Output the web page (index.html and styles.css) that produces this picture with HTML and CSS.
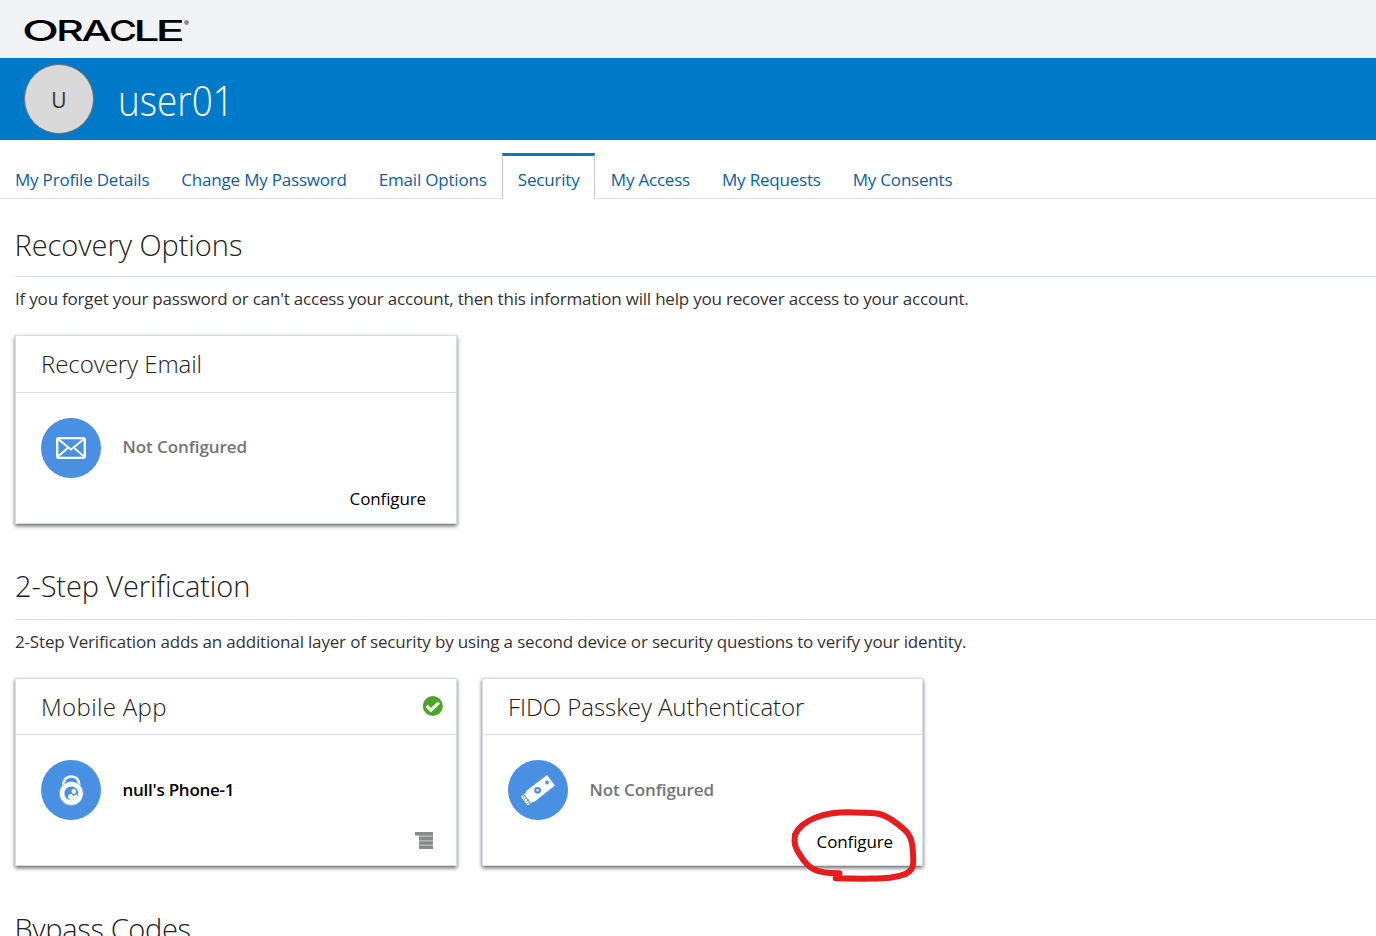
FILE: index.html
```html
<!DOCTYPE html>
<html lang="en">
<head>
<meta charset="utf-8">
<title>My Profile - Security</title>
<link rel="stylesheet" href="styles.css">
</head>
<body>
<header class="topbar">
  <svg class="logo" width="180" height="50" viewBox="-4 -10 180 50" role="img" aria-label="Oracle">
    <g class="logo-letters">
      <text x="-2" y="27" textLength="37" lengthAdjust="spacingAndGlyphs">O</text>
      <text x="32" y="27" textLength="28" lengthAdjust="spacingAndGlyphs">R</text>
      <text x="57.500" y="27" textLength="30" lengthAdjust="spacingAndGlyphs">A</text>
      <text x="85" y="27" textLength="28" lengthAdjust="spacingAndGlyphs">C</text>
      <text x="109.500" y="27" textLength="26" lengthAdjust="spacingAndGlyphs">L</text>
      <text x="131.500" y="27" textLength="29.500" lengthAdjust="spacingAndGlyphs">E</text>
    </g>
    <circle cx="162.500" cy="8.500" r="2.400" fill="#8b8c8d"/>
  </svg>
</header>
<div class="banner">
  <div class="avatar">U</div>
  <h1 class="username">user01</h1>
</div>
<nav class="tabs">
  <a class="tab">My Profile Details</a>
  <a class="tab">Change My Password</a>
  <a class="tab">Email Options</a>
  <a class="tab active">Security</a>
  <a class="tab">My Access</a>
  <a class="tab">My Requests</a>
  <a class="tab">My Consents</a>
</nav>
<main class="content">
  <section class="section recovery">
    <h2 class="heading">Recovery Options</h2>
    <p class="intro">If you forget your password or can't access your account, then this information will help you recover access to your account.</p>
    <div class="cards">
      <article class="card">
        <div class="card-head"><h3>Recovery Email</h3></div>
        <div class="card-body">
          <span class="badge">
            <svg width="60" height="60" viewBox="0 0 60 60" fill="none" stroke="#fff">
              <rect x="16.200" y="20.200" width="27.600" height="19.600" rx="1.500" stroke-width="2.300"/>
              <path d="M17 21l13 10.500L43 21M17 38.500l9.500-8.300M43 38.500l-9.500-8.300" stroke-width="2"/>
            </svg>
          </span>
          <span class="status muted">Not Configured</span>
        </div>
        <div class="card-foot"><a class="action">Configure</a></div>
      </article>
    </div>
  </section>
  <section class="section twostep">
    <h2 class="heading">2-Step Verification</h2>
    <p class="intro">2-Step Verification adds an additional layer of security by using a second device or security questions to verify your identity.</p>
    <div class="cards">
      <article class="card">
        <div class="card-head">
          <h3 class="wide">Mobile App</h3>
          <svg class="check" width="21" height="20" viewBox="0 0 21 20">
            <circle cx="10.800" cy="10" r="10" fill="#4ba524"/>
            <path d="M4.700 9.800l4.300 4.400L16.800 6.700" fill="none" stroke="#fff" stroke-width="3.200"/>
          </svg>
        </div>
        <div class="card-body">
          <span class="badge">
            <svg width="60" height="60" viewBox="0 0 60 60">
              <path d="M22.300 26c0-6 2.500-9.500 8-9.500s8 3.500 8 9.500" fill="none" stroke="#fff" stroke-width="2.600"/>
              <circle cx="30.300" cy="33.400" r="12" fill="#fff" stroke="#4990e2" stroke-width=".6"/>
              <circle cx="30.300" cy="33.400" r="6.900" fill="#4990e2"/>
              <circle cx="32.800" cy="31.400" r="2.300" fill="#fff"/>
              <path d="M27.300 35.200q1.500-1.800 3.600-1l1.500 2.200 1.800-2 2.300.3q-1 4.300-4.200 5h-3.500q-2-1-1.500-4.500z" fill="#fff"/>
            </svg>
          </span>
          <span class="status">null's Phone-1</span>
        </div>
        <div class="card-foot">
          <svg class="menu" width="18" height="17" viewBox="0 0 18 17">
            <path d="M4 3h14v14H4z" fill="#b4b6b7"/>
            <path d="M0 0h18v3.500H0zM4 5h14v3H4zM4 9.500h14v3H4zM4 14h14v3H4z" fill="#87898b"/>
          </svg>
        </div>
      </article>
      <article class="card fido">
        <div class="card-head"><h3>FIDO Passkey Authenticator</h3></div>
        <div class="card-body">
          <span class="badge">
            <svg width="60" height="60" viewBox="0 0 60 60">
              <path d="M39 15l8 10.500-20.300 16.100-2.300.3-4.700 3.600L13 36.800l4.700-3.700.8-2.300z" fill="#fff"/>
              <circle cx="29.600" cy="30.300" r="2.300" fill="#fff" stroke="#4990e2" stroke-width="2.200"/>
              <circle cx="39" cy="22.500" r="1.900" fill="#4990e2"/>
              <path d="M16.200 35.200l6 7.700M14.600 37.600l3-2.100M16.200 39.700l3-2.100M17.800 41.800l3-2.100M19.400 43.700l2.600-1.800" fill="none" stroke="#4990e2"/>
            </svg>
          </span>
          <span class="status muted">Not Configured</span>
        </div>
        <div class="card-foot"><a class="action">Configure</a></div>
        <svg class="marker" width="126" height="73" viewBox="963 417 378 219">
          <path d="M1108 610C1040 611 1015 597 990 555C975 532 971 520 975 494C998 446 1065 427 1136 427C1235 429 1233 429 1266 450C1311 481 1326 496 1328 538C1332 585 1332 598 1308 611C1268 627 1240 625 1182 626L1097 625"/>
        </svg>
      </article>
    </div>
  </section>
  <section class="section bypass">
    <h2 class="heading">Bypass Codes</h2>
  </section>
</main>
</body>
</html>
```

FILE: styles.css
```css
* { box-sizing: border-box; }
html { overflow: hidden; }
body {
  margin: 0;
  height: 936px;
  overflow: hidden;
  background: #fff;
  color: #333;
  font: 17px/24px "Open Sans", "Noto Sans", sans-serif;
}
h1, h2, h3, p { margin: 0; font-weight: 300; }

.topbar {
  height: 58px;
  padding: 4px 0 0 20px;
  background: #f2f3f5;
}
.logo { display: block; }
.logo-letters {
  font-family: Inter, sans-serif;
  font-size: 29px;
  font-weight: 500;
  fill: #000;
}

.banner {
  display: flex;
  align-items: flex-start;
  height: 82px;
  padding: 6px 24px 0;
  background: #007ac8;
}
.avatar {
  width: 70px;
  height: 70px;
  border: 1px solid #777;
  border-radius: 50%;
  background: #d9d9d9;
  color: #333;
  font-size: 21px;
  line-height: 70px;
  text-align: center;
}
.username {
  margin: 8px 0 0 24px;
  color: #fff;
  font-size: 42px;
  line-height: 56px;
  transform: scaleX(0.88);
  transform-origin: left;
}

.tabs {
  display: flex;
  height: 59px;
  padding-top: 13px;
  border-bottom: 1px solid #dfe1e3;
}
.tab {
  height: 46px;
  padding: 15px 16px 0;
  color: #0b5ea8;
  letter-spacing: -0.2px;
  white-space: nowrap;
}
.tab:first-child { padding-left: 15px; }
.tab:nth-child(3) { width: 139px; }
.tab.active {
  width: 93px;
  padding: 12px 15px 0;
  border: solid #c6c8ca;
  border-width: 3px 1px 0;
  border-top-color: #007ac8;
  background: #fff;
}

.content { padding: 26px 0 0 15px; }
.heading {
  height: 52px;
  border-bottom: 1px solid #d6dfe6;
  font-size: 29px;
  line-height: 40px;
  text-indent: -0.5px;
  letter-spacing: -0.05px;
  color: #222;
}
.twostep { padding-top: 42px; }
.twostep .heading { height: 54px; text-indent: 0; letter-spacing: -0.12px; }
.bypass { padding-top: 42px; }
.bypass .heading { letter-spacing: -0.35px; }
.intro {
  padding-top: 10px;
  margin-bottom: -1px;
  font-weight: 400;
  letter-spacing: -0.2px;
  white-space: nowrap;
}
.twostep .intro { letter-spacing: -0.17px; }

.cards { display: flex; gap: 24px; padding-top: 25px; }
.card {
  position: relative;
  display: flex;
  flex-direction: column;
  width: 442px;
  height: 189px;
  border: 1px solid #d6dfe6;
  background: #fff;
  box-shadow: 0 2px 4px rgba(0, 0, 0, 0.6);
}
.twostep .card { height: 188px; margin-bottom: 1px; }
.twostep .fido { width: 441px; margin-left: 1px; }
.card-head {
  display: flex;
  justify-content: space-between;
  height: 57px;
  padding: 8px 13px 0 25px;
  border-bottom: 1px solid #d6dfe6;
}
.twostep .card-head { height: 56px; }
.card-head h3 { font-size: 24px; line-height: 40px; letter-spacing: -0.06px; color: #222; }
.card-head .wide { letter-spacing: 0.35px; }
.check { margin-top: 9px; }
.card-body {
  display: flex;
  align-items: center;
  gap: 21px;
  padding: 25px 25px 0;
}
.badge {
  width: 60px;
  height: 60px;
  border-radius: 50%;
  background: #4990e2;
}
.badge svg { display: block; }
.status {
  padding: 0 0 2px 0.5px;
  color: #000;
  font-weight: 600;
  letter-spacing: -0.25px;
}
.twostep .status { padding-bottom: 0; }
.status.muted { color: #757575; letter-spacing: -0.08px; }
.card-foot {
  display: flex;
  justify-content: flex-end;
  margin-top: auto;
  padding: 0 30px 12px;
}
.twostep .card-foot { padding-bottom: 11px; }
.twostep .fido .card-foot { padding-right: 29px; }
.action { color: #000; letter-spacing: -0.12px; }
.menu { margin: 0 -7px 5px 0; }
.marker {
  position: absolute;
  left: 308px;
  top: 130px;
  overflow: visible;
  fill: none;
  stroke: #e71c1c;
  stroke-width: 18;
  stroke-linecap: round;
  stroke-linejoin: round;
}
```
